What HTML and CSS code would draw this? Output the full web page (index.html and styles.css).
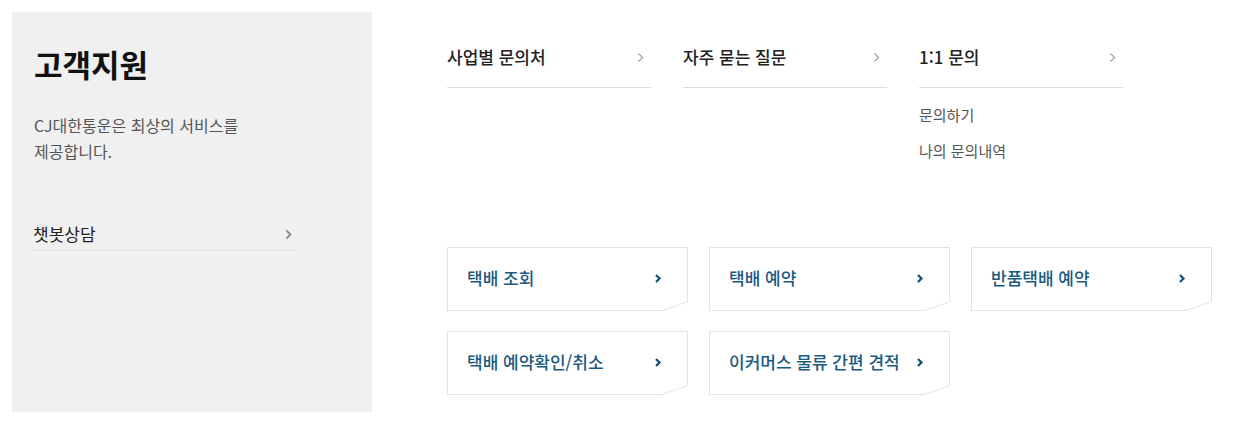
FILE: index.html
```html
<!DOCTYPE html>
<html lang="ko">
<head>
<meta charset="utf-8">
<link rel="stylesheet" href="styles.css">
</head>
<body>
<div class="page">
  <aside class="intro">
    <h1 class="intro-title">고객지원</h1>
    <p class="intro-desc">CJ대한통운은 최상의 서비스를<br>제공합니다.</p>
    <a class="intro-link">
      <span>챗봇상담</span>
      <svg width="7" height="11" viewBox="0 0 7 11"><polyline points="1.5,1.5 5.5,5.5 1.5,9.5" fill="none" stroke="#888" stroke-width="1.8"/></svg>
    </a>
  </aside>
  <main class="content">
    <div class="menu-cols">
      <div class="menu-col">
        <a class="menu-head"><span>사업별 문의처</span><svg width="7" height="11" viewBox="0 0 7 11"><polyline points="1.5,1.5 5.5,5.5 1.5,9.5" fill="none" stroke="#a0a0a0" stroke-width="1.3"/></svg></a>
      </div>
      <div class="menu-col">
        <a class="menu-head"><span>자주 묻는 질문</span><svg width="7" height="11" viewBox="0 0 7 11"><polyline points="1.5,1.5 5.5,5.5 1.5,9.5" fill="none" stroke="#a0a0a0" stroke-width="1.3"/></svg></a>
      </div>
      <div class="menu-col">
        <a class="menu-head"><span>1:1 문의</span><svg width="7" height="11" viewBox="0 0 7 11"><polyline points="1.5,1.5 5.5,5.5 1.5,9.5" fill="none" stroke="#a0a0a0" stroke-width="1.3"/></svg></a>
        <ul class="sub-list">
          <li>문의하기</li>
          <li>나의 문의내역</li>
        </ul>
      </div>
    </div>
    <div class="cards">
      <a class="card"><span>택배 조회</span><svg width="8" height="11" viewBox="0 0 8 11"><polyline points="2,2 5.5,5.5 2,9" fill="none" stroke="#144f73" stroke-width="2.2"/></svg></a>
      <a class="card"><span>택배 예약</span><svg width="8" height="11" viewBox="0 0 8 11"><polyline points="2,2 5.5,5.5 2,9" fill="none" stroke="#144f73" stroke-width="2.2"/></svg></a>
      <a class="card"><span>반품택배 예약</span><svg width="8" height="11" viewBox="0 0 8 11"><polyline points="2,2 5.5,5.5 2,9" fill="none" stroke="#144f73" stroke-width="2.2"/></svg></a>
      <a class="card"><span>택배 예약확인/취소</span><svg width="8" height="11" viewBox="0 0 8 11"><polyline points="2,2 5.5,5.5 2,9" fill="none" stroke="#144f73" stroke-width="2.2"/></svg></a>
      <a class="card"><span>이커머스 물류 간편 견적</span><svg width="8" height="11" viewBox="0 0 8 11"><polyline points="2,2 5.5,5.5 2,9" fill="none" stroke="#144f73" stroke-width="2.2"/></svg></a>
    </div>
  </main>
</div>
</body>
</html>
```

FILE: styles.css
```css
* { box-sizing: border-box; }
html, body { margin: 0; padding: 0; background: #fff; }
body {
  font-family: "Noto Sans CJK KR", "Noto Sans", sans-serif;
  color: #222;
}
.page {
  display: flex;
  align-items: flex-start;
  padding: 12px;
}
.intro {
  width: 360px;
  height: 400px;
  background: #f0f0f0;
  padding: 34px 0 0 22px;
  flex-shrink: 0;
}
.intro-title {
  margin: 0;
  font-size: 31px;
  line-height: 36px;
  font-weight: 700;
  color: #111;
}
.intro-desc {
  margin: 30px 0 0;
  font-size: 16px;
  line-height: 26px;
  color: #555;
}
.intro-link {
  margin: 58px 0 0 -1px;
  width: 265px;
  display: flex;
  justify-content: space-between;
  align-items: center;
  padding: 0 6px 4px 0;
  border-bottom: 1px solid #e2e2e2;
  font-size: 17px;
  line-height: 24px;
  color: #222;
}
.content {
  padding-left: 75px;
  padding-top: 33px;
}
.menu-cols {
  display: flex;
  gap: 32px;
}
.menu-col {
  width: 204px;
}
.menu-head {
  display: flex;
  justify-content: space-between;
  align-items: center;
  padding: 0 7px 18px 0;
  border-bottom: 1px solid #dcdcdc;
  font-size: 17px;
  line-height: 24px;
  color: #222;
}
.menu-head span { font-weight: 500; }
.sub-list {
  list-style: none;
  margin: 17px 0 0;
  padding: 0;
  display: flex;
  flex-direction: column;
  gap: 16px;
  font-size: 15px;
  line-height: 20px;
  color: #555;
}
.cards {
  margin-top: 86px;
  display: grid;
  grid-template-columns: repeat(3, 241px);
  gap: 20px 21px;
}
.card {
  position: relative;
  height: 64px;
  display: flex;
  justify-content: space-between;
  align-items: center;
  padding: 0 26px 2px 20px;
  font-size: 17px;
  line-height: 24px;
  font-weight: 500;
  color: #1a5a80;
  background: #e3e3e3;
  clip-path: polygon(0 0, 100% 0, 100% calc(100% - 9px), calc(100% - 26px) 100%, 0 100%);
}
.card::before {
  content: "";
  position: absolute;
  inset: 1px;
  background: #fff;
  clip-path: polygon(0 0, 100% 0, 100% calc(100% - 8.5px), calc(100% - 25px) 100%, 0 100%);
}
.card span, .card svg { position: relative; }
```
